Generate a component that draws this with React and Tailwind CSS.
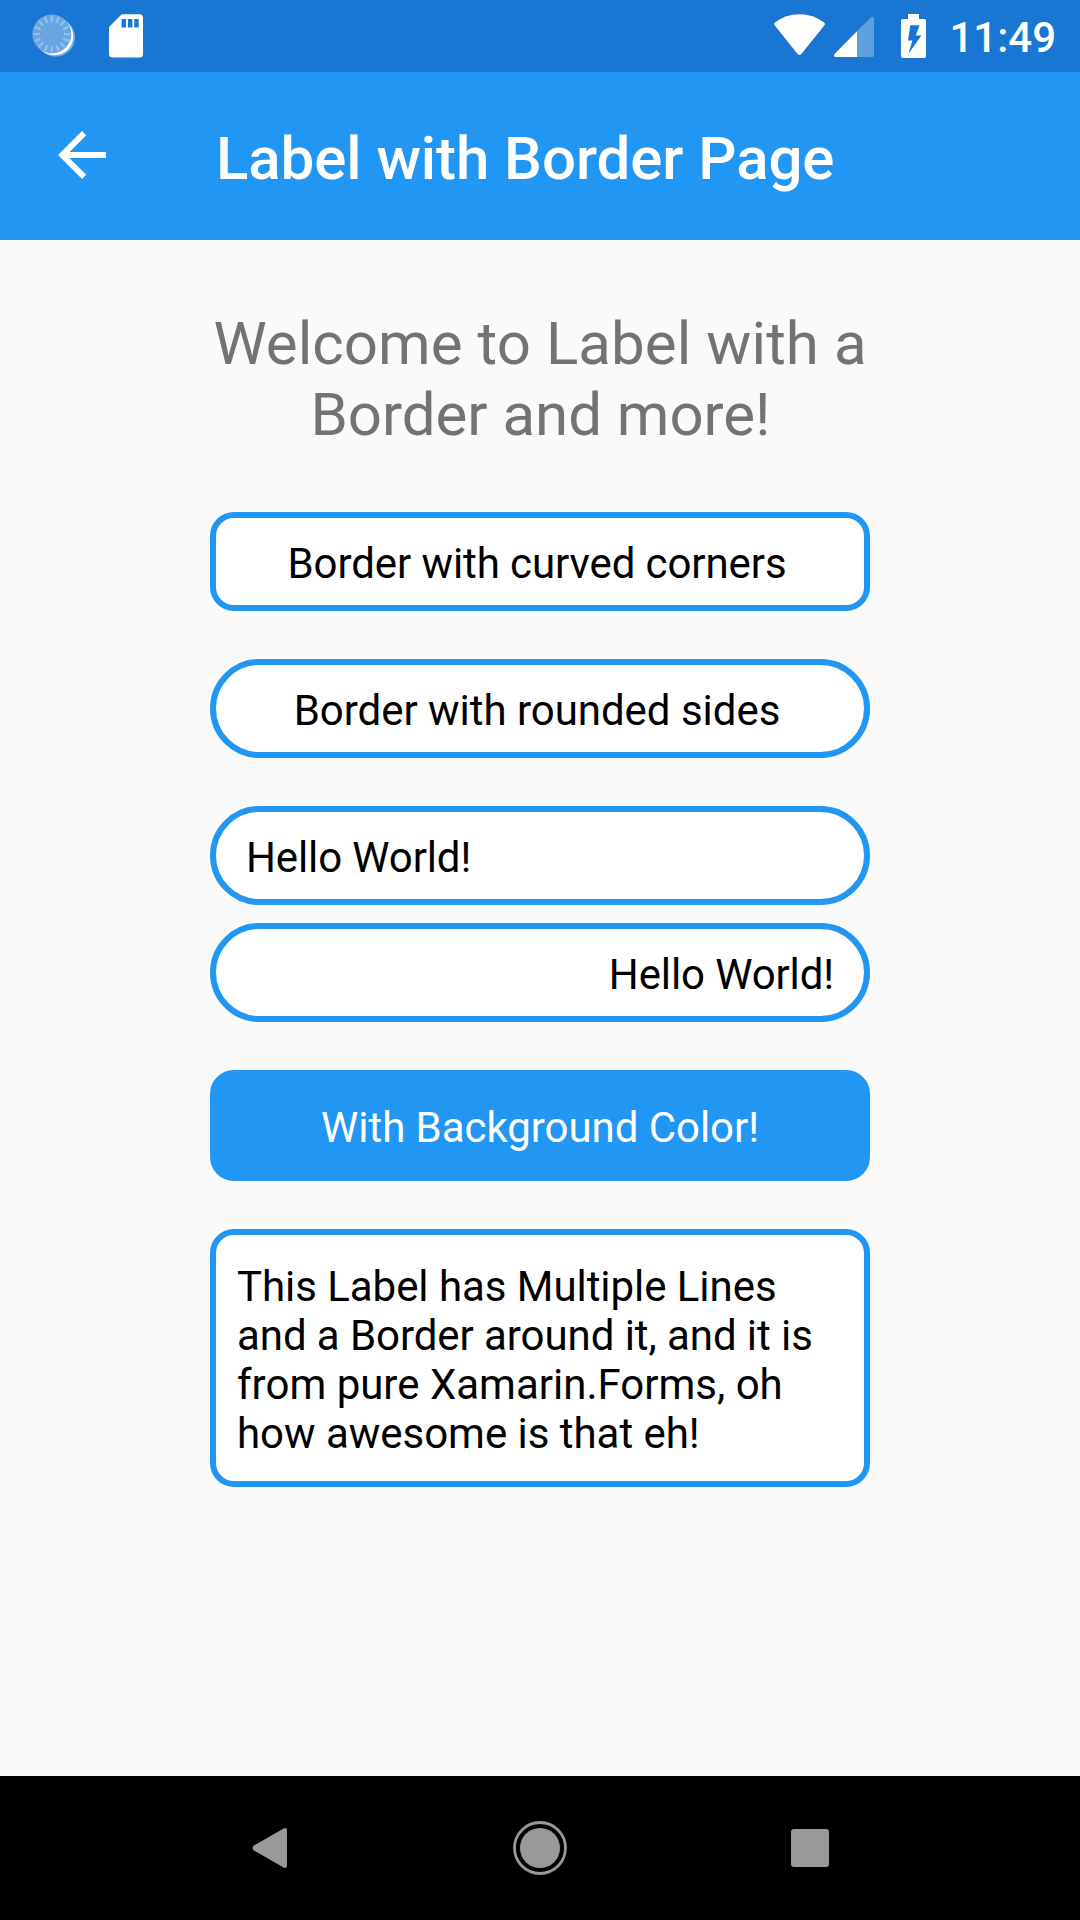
function SyncIcon() {
  const ticks = Array.from({ length: 16 }, (_, i) => i * 22.5);
  return (
    <svg className="h-[48px] w-[48px]" viewBox="28 12 48 48">
      <circle cx="55.6" cy="37.4" r="19.4" fill="#fff" fillOpacity="0.4" />
      <circle cx="54.3" cy="36.2" r="19" fill="#fff" />
      <circle cx="51.8" cy="34" r="19.5" fill="#69a5e2" />
      <g stroke="#94c0ec" strokeWidth="2.2">
        {ticks.map((a) => (
          <line key={a} x1="51.8" y1="15.6" x2="51.8" y2="21.8" transform={`rotate(${a} 51.8 34)`} />
        ))}
      </g>
    </svg>
  );
}

function SdCardIcon() {
  return (
    <svg className="ml-[33px] h-[44px] w-[34px]" viewBox="109 14 34 44">
      <path
        fill="#fff"
        fillRule="evenodd"
        d="M122.5 14.3H139.5Q143 14.3 143 17.8V54Q143 57.5 139.5 57.5H112.5Q109 57.5 109 54V28Q109 27 109.8 26.2L121 15Q121.7 14.3 122.5 14.3ZM121.6 19V27.4H126.1V19ZM127.9 19V27.4H132.4V19ZM134.3 19V27.4H138.7V19Z"
      />
    </svg>
  );
}

function WifiIcon() {
  return (
    <svg className="h-[42px] w-[52px]" viewBox="774 14 52 42">
      <path
        fill="#fff"
        d="M774.6 25.2Q773.4 23.6 775 22.4Q786 14.2 799.5 14.2Q813 14.2 824 22.4Q825.6 23.6 824.4 25.2L801.4 54Q799.5 56 797.6 54Z"
      />
    </svg>
  );
}

function SignalIcon() {
  return (
    <svg className="ml-[8px] h-[40px] w-[40px]" viewBox="834 17 40 40">
      <path fill="#fff" fillOpacity="0.3" d="M857 31.3L870.3 17.9Q874 15.6 874 19V55Q874 57 872 57H857Z" />
      <path fill="#fff" d="M857 31.3V57H835.6Q833 56.8 834.7 53.7Z" />
    </svg>
  );
}

function BatteryIcon() {
  return (
    <svg className="ml-[27px] h-[44px] w-[25px]" viewBox="901 14 25 44">
      <path
        fill="#fff"
        fillRule="evenodd"
        d="M908 14H919V19H924Q926 19 926 21V56Q926 58 924 58H903Q901 58 901 56V21Q901 19 903 19H908ZM910.2 25.2L908 40.5H912.4L908.3 54L921.5 35.5H915.8L919.6 25.2Z"
      />
    </svg>
  );
}

function StatusBar() {
  return (
    <div className="flex h-[72px] items-start justify-between bg-[#1976d2] text-white">
      <div className="flex items-center pl-[28px] pt-[12px]">
        <SyncIcon />
        <SdCardIcon />
      </div>
      <div className="flex items-start pr-[24px]">
        <div className="flex items-end pt-[14px]">
          <div className="mb-[2px]"><WifiIcon /></div>
          <div className="mb-px"><SignalIcon /></div>
          <BatteryIcon />
        </div>
        <span className="ml-[23px] mt-[13px] text-[42px] leading-[49px] font-medium">11:49</span>
      </div>
    </div>
  );
}

function AppBar() {
  return (
    <header className="flex h-[168px] items-start bg-[#2196f3] text-white">
      <svg className="ml-[46px] mt-[47px] h-[72px] w-[72px]" viewBox="0 0 24 24" fill="currentColor">
        <path d="M20 11H7.83l5.59-5.59L12 4l-8 8 8 8 1.41-1.41L7.83 13H20v-2z" />
      </svg>
      <h1 className="ml-[98px] mt-[51px] text-[60px] leading-[71px] font-medium tracking-[-0.07px] whitespace-nowrap">
        Label with Border Page
      </h1>
    </header>
  );
}

function NavBar() {
  return (
    <nav className="grid h-[144px] grid-cols-3 place-items-center bg-black px-[135px]">
      <svg className="h-[60px] w-[60px]" viewBox="240 1818 60 60" fill="#999">
        <path d="M253.8 1845.6L283.6 1828.6Q287 1827 287 1830.4V1865.6Q287 1869 283.6 1867.4L253.8 1850.4Q251.4 1848 253.8 1845.6Z" />
      </svg>
      <svg className="h-[60px] w-[60px]" viewBox="0 0 60 60">
        <circle cx="30" cy="30" r="25.5" fill="none" stroke="#999" strokeWidth="2.8" />
        <circle cx="30" cy="30" r="20" fill="#999" />
      </svg>
      <div className="h-[38px] w-[38px] rounded-[3px] bg-[#999]" />
    </nav>
  );
}

const labelBase = "w-full border-[6px] border-[#2196f3] text-[42px] leading-[49px]";

export default function App() {
  return (
    <div className="flex h-[1920px] w-[1080px] flex-col overflow-hidden bg-[#fafafa] font-['Roboto',sans-serif]">
      <StatusBar />
      <AppBar />
      <main className="flex flex-1 flex-col px-[210px] pt-[68px] text-black">
        <h2 className="text-center text-[60px] leading-[71px] whitespace-nowrap text-[#737373]">
          <span className="tracking-[0.07px]">Welcome to Label with a</span>
          <br />
          <span className="pl-px tracking-[-0.04px]">Border and more!</span>
        </h2>
        <div className={`${labelBase} mt-[62px] h-[99px] rounded-[24px] bg-white pt-[21px] pr-[6px] text-center tracking-[-0.09px]`}>
          Border with curved corners
        </div>
        <div className={`${labelBase} mt-[48px] h-[99px] rounded-full bg-white pt-[21px] pr-[6px] text-center tracking-[-0.03px]`}>
          Border with rounded sides
        </div>
        <div className={`${labelBase} mt-[48px] h-[99px] rounded-full bg-white pt-[21px] pl-[30px] text-left tracking-[-0.12px]`}>
          Hello World!
        </div>
        <div className={`${labelBase} mt-[18px] h-[99px] rounded-full bg-white pt-[21px] pr-[30px] text-right tracking-[-0.12px]`}>
          Hello World!
        </div>
        <div className={`${labelBase} mt-[48px] h-[111px] rounded-[24px] bg-[#2196f3] pt-[27px] text-center tracking-[-0.05px] text-white`}>
          With Background Color!
        </div>
        <div className={`${labelBase} mt-[48px] h-[258px] rounded-[24px] bg-white pt-[27px] pl-[21px] whitespace-nowrap`}>
          <span className="tracking-[-0.05px]">This Label has Multiple Lines</span>
          <br />
          <span className="tracking-[-0.07px]">and a Border around it, and it is</span>
          <br />
          from pure Xamarin.Forms, oh
          <br />
          <span className="tracking-[-0.03px]">how awesome is that eh!</span>
        </div>
      </main>
      <NavBar />
    </div>
  );
}
